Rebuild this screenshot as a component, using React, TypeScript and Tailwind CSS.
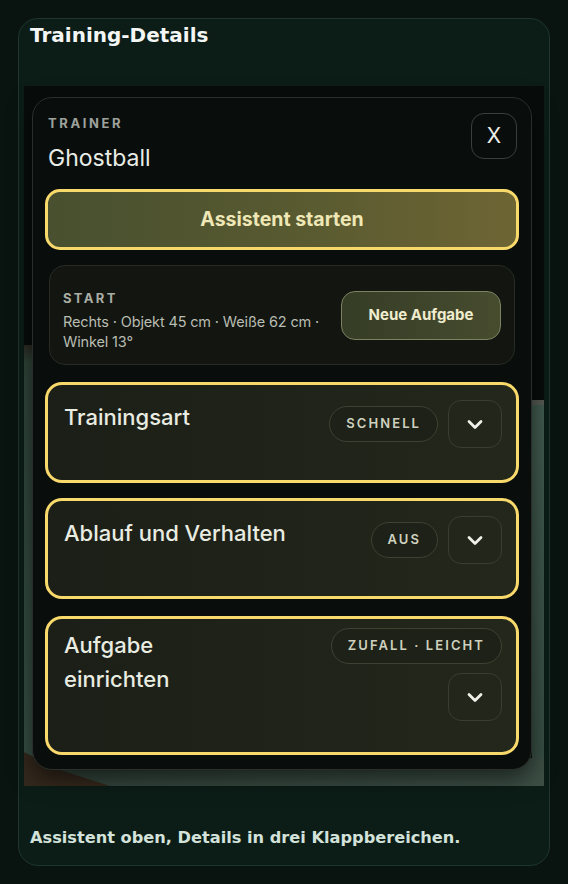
const inter = { fontFamily: '"Inter", "Noto Sans", sans-serif' }

function Chevron() {
  return (
    <svg viewBox="0 0 20 14" className="h-[14px] w-[20px]" fill="none" stroke="#f1f1ea" strokeWidth="2.8" strokeLinecap="round" strokeLinejoin="round">
      <path d="M4 4.5 10 10.5l6-6" />
    </svg>
  )
}

function Pill({ children }: { children: React.ReactNode }) {
  return (
    <span className="flex h-9 items-center whitespace-nowrap rounded-full border border-[#3d4333] bg-[#1d2117] px-4 text-[13px] font-semibold tracking-[0.16em] text-[#cfd1bf]">
      {children}
    </span>
  )
}

function ChevronButton() {
  return (
    <span className="flex h-12 w-[54px] items-center justify-center rounded-[13px] border border-[#393e30] bg-[#23271b]">
      <Chevron />
    </span>
  )
}

function Backdrop() {
  return (
    <svg className="absolute inset-0 h-full w-full" viewBox="0 0 520 700" preserveAspectRatio="none">
      <defs>
        <linearGradient id="lstrip" x1="0" y1="0" x2="0" y2="1">
          <stop offset="0" stopColor="#2b2a22" />
          <stop offset="0.04" stopColor="#31463b" />
          <stop offset="1" stopColor="#385246" />
        </linearGradient>
        <linearGradient id="rstrip" x1="0" y1="0" x2="0" y2="1">
          <stop offset="0" stopColor="#435d52" />
          <stop offset="1" stopColor="#384f45" />
        </linearGradient>
        <linearGradient id="bstrip" x1="0" y1="0" x2="1" y2="0">
          <stop offset="0" stopColor="#32443b" />
          <stop offset="1" stopColor="#3d5046" />
        </linearGradient>
      </defs>
      <rect width="520" height="700" fill="#080d0b" />
      <rect x="0" y="259" width="10" height="441" fill="url(#lstrip)" />
      <rect x="508" y="314" width="12" height="5" fill="#575c56" />
      <rect x="508" y="319" width="12" height="381" fill="url(#rstrip)" />
      <rect x="0" y="672" width="520" height="28" fill="url(#bstrip)" />
      <polygon points="0,666 0,700 86,700 36,684" fill="#35291d" />
    </svg>
  )
}

export default function App() {
  return (
    <div className="min-h-[884px] w-full bg-[#091411] pt-[18px]" style={{ fontFamily: '"DejaVu Sans", sans-serif' }}>
      <div className="mx-[18px] w-[532px] rounded-[20px] border border-[#20362d] bg-[#0c1d17] px-[5px] pb-[15px] pt-[2px]">
        <h1 className="pl-[6px] text-[20px] font-bold leading-[29px] text-[#f3f6f4]">Training-Details</h1>

        <div className="relative mt-[36px] h-[700px] w-[520px] pl-2 pr-3 pt-[11px]">
          <Backdrop />
          <div
            className="relative flex w-[500px] flex-col rounded-[20px] border border-[#2a2f2b] bg-[#090e0c] px-3 pb-[14px] pt-[15px] shadow-[0_8px_24px_rgba(0,0,0,0.6)]"
            style={inter}
          >
            <div className="flex items-start justify-between pl-[3px] pr-[2px]">
              <div className="pt-[1px]">
                <div className="text-[13px] font-bold leading-[18px] tracking-[0.2em] text-[#9ea29d]">TRAINER</div>
                <div className="mt-3 text-[23px] leading-[28px] text-[#e9ece6]">Ghostball</div>
              </div>
              <span className="flex h-[46px] w-[46px] items-center justify-center rounded-[13px] border border-[#3a3f3b] text-[21px] text-[#eeeeea]">
                X
              </span>
            </div>

            <div className="mt-[17px] flex h-[61px] items-center justify-center rounded-[15px] border-[3px] border-[#f8d96b] bg-gradient-to-r from-[#48502f] via-[#575930] to-[#6e6534] text-[19.5px] font-bold text-[#efe8b6]">
              Assistent starten
            </div>

            <div className="mx-1 mt-[15px] flex h-[100px] items-center justify-between rounded-[16px] border border-[#272b24] bg-[#121510] pl-[13px] pr-[13px]">
              <div className="pt-[10px]">
                <div className="text-[13px] font-bold leading-[18px] tracking-[0.18em] text-[#a9ada4]">START</div>
                <div className="mt-[5px] whitespace-nowrap text-[14.5px] leading-5 tracking-[-0.01em] text-[#b9bdb2]">
                  Rechts · Objekt 45 cm · Weiße 62 cm ·
                  <br />
                  Winkel 13°
                </div>
              </div>
              <span className="flex h-[49px] w-[160px] items-center justify-center rounded-[14px] border-[1.5px] border-[#7b8360] bg-gradient-to-r from-[#363d26] to-[#474c2f] text-[15px] font-bold text-[#f0ecce]">
                Neue Aufgabe
              </span>
            </div>

            <div className="mt-[17px] flex items-start justify-between rounded-[17px] border-[3px] border-[#f8d96b] bg-gradient-to-r from-[#1c1f17] to-[#24271b] pb-[32px] pl-[16px] pr-[14px] pt-[15px]">
              <div className="text-[22px] font-medium leading-[34px] text-[#e9ece1]">Trainingsart</div>
              <div className="flex items-center gap-[10px]">
                <Pill>SCHNELL</Pill>
                <ChevronButton />
              </div>
            </div>

            <div className="mt-[15px] flex items-start justify-between rounded-[17px] border-[3px] border-[#f8d96b] bg-gradient-to-r from-[#1c1f17] to-[#24271b] pb-[32px] pl-[16px] pr-[14px] pt-[15px]">
              <div className="text-[22px] font-medium leading-[34px] text-[#e9ece1]">Ablauf und Verhalten</div>
              <div className="flex items-center gap-[10px]">
                <Pill>AUS</Pill>
                <ChevronButton />
              </div>
            </div>

            <div className="mt-[17px] flex items-start justify-between rounded-[17px] border-[3px] border-[#f8d96b] bg-gradient-to-r from-[#1c1f17] to-[#24271b] pb-[31px] pl-[16px] pr-[14px] pt-[9px]">
              <div className="max-w-[160px] text-[22px] font-medium leading-[34px] text-[#e9ece1]">Aufgabe einrichten</div>
              <div className="flex flex-col items-end gap-[9px]">
                <Pill>ZUFALL · LEICHT</Pill>
                <ChevronButton />
              </div>
            </div>
          </div>
        </div>

        <p className="mt-[40px] pl-[6px] text-[16.2px] font-bold leading-[24px] text-[#d3e2da]">
          Assistent oben, Details in drei Klappbereichen.
        </p>
      </div>
    </div>
  )
}
